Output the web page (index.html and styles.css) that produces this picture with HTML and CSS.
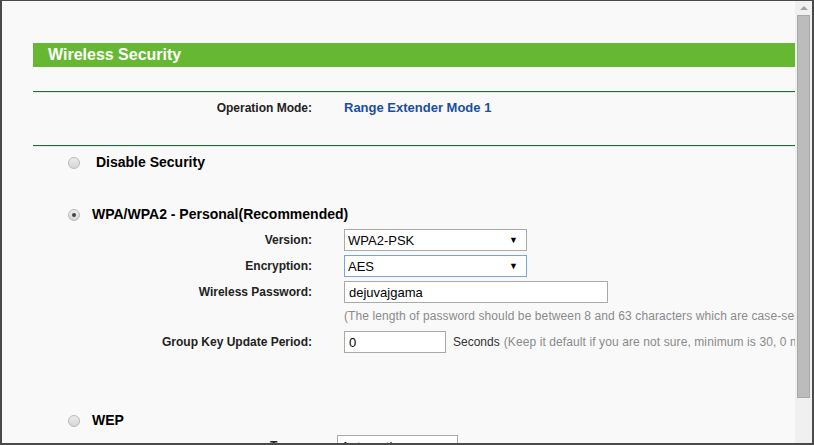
FILE: index.html
```html
<!DOCTYPE html>
<html lang="en">
<head>
    <meta charset="UTF-8">
    <title>Wireless Security</title>
    <link rel="stylesheet" href="styles.css">
</head>
<body>
    <div class="window">
        <div class="viewport">
            <div class="page">
                <div class="title-bar">Wireless Security</div>
                <div class="rule"></div>

                <div class="mode-row">
                    <span class="field-label">Operation Mode:</span>
                    <span class="mode-value">Range Extender Mode 1</span>
                </div>
                <div class="rule"></div>

                <label class="option option-disable">
                    <input type="radio" name="security">
                    <span>Disable Security</span>
                </label>

                <label class="option option-wpa">
                    <input type="radio" name="security" checked>
                    <span>WPA/WPA2 - Personal(Recommended)</span>
                </label>

                <div class="fields">
                    <span class="field-label">Version:</span>
                    <div class="select-box">
                        <select class="control">
                            <option>WPA2-PSK</option>
                        </select>
                        <span class="select-arrow">&#9660;</span>
                    </div>

                    <span class="field-label">Encryption:</span>
                    <div class="select-box">
                        <select class="control focused">
                            <option>AES</option>
                        </select>
                        <span class="select-arrow">&#9660;</span>
                    </div>

                    <span class="field-label">Wireless Password:</span>
                    <input type="text" class="control password" value="dejuvajgama">

                    <span></span>
                    <span class="hint hint-row">(The length of password should be between 8 and 63 characters which are case-sensitive.)</span>

                    <span class="field-label">Group Key Update Period:</span>
                    <div class="inline">
                        <input type="text" class="control period" value="0">
                        <span class="unit">Seconds</span>
                        <span class="hint">(Keep it default if you are not sure, minimum is 30, 0 means no update.)</span>
                    </div>
                </div>

                <label class="option option-wep">
                    <input type="radio" name="security">
                    <span>WEP</span>
                </label>

                <div class="fields fields-wep">
                    <span class="field-label">Type:</span>
                    <div class="select-box">
                        <select class="control type">
                            <option>Automatic</option>
                        </select>
                        <span class="select-arrow">&#9660;</span>
                    </div>
                </div>
            </div>
        </div>
        <div class="scrollbar">
            <span class="scroll-arrow"></span>
            <div class="scroll-thumb"></div>
        </div>
    </div>
</body>
</html>
```

FILE: styles.css
```css
body {
    margin: 0;
    font-family: "Liberation Sans", Arial, sans-serif;
    background: #ffffff;
}
.window {
    width: 810px;
    height: 442px;
    border: 2px solid #4a4a4a;
    border-top-width: 1px;
    display: flex;
    overflow: hidden;
}
.viewport {
    flex: 1;
    background: #f9f9f9;
    overflow: hidden;
}
.page {
    padding: 42px 0 0 31px;
}
.title-bar {
    height: 24px;
    line-height: 24px;
    padding-left: 15px;
    background: #66b832;
    color: #ffffff;
    font-size: 16px;
    font-weight: bold;
}
.rule {
    margin-top: 24px;
    border-top: 1px solid #1f6a37;
    border-bottom: 1px solid #e3ece5;
}
.mode-row {
    display: grid;
    grid-template-columns: 279px 1fr;
    column-gap: 32px;
    height: 52px;
    padding-top: 7px;
    box-sizing: border-box;
    line-height: 16px;
}
.mode-row + .rule {
    margin-top: 0;
}
.field-label {
    text-align: right;
    font-size: 12px;
    font-weight: bold;
    color: #222;
}
.mode-value {
    font-size: 13px;
    font-weight: bold;
    color: #1a4ea3;
}
.option {
    display: flex;
    align-items: center;
    margin-left: 35px;
    line-height: 16px;
    font-size: 14px;
    font-weight: bold;
    color: #000;
}
.option input {
    appearance: none;
    -webkit-appearance: none;
    width: 12px;
    height: 12px;
    margin: 1px 12px 0 0;
    border: 1px solid #b9b9b9;
    border-radius: 50%;
    background: linear-gradient(#ececec, #d6d6d6);
    box-sizing: border-box;
    position: relative;
}
.option input:checked::after {
    content: "";
    position: absolute;
    left: 3px;
    top: 3px;
    width: 4px;
    height: 4px;
    border-radius: 50%;
    background: #444;
}
.option-disable {
    margin-top: 7px;
}
.option-disable input {
    margin-right: 16px;
}
.option-wpa {
    margin-top: 36px;
}
.option-wep {
    margin-top: 59px;
}
.fields {
    display: grid;
    grid-template-columns: 279px 1fr;
    column-gap: 32px;
    row-gap: 4px;
    align-items: center;
    margin-top: 7px;
}
.fields-wep {
    grid-template-columns: 268px 1fr;
    column-gap: 36px;
}
.select-box {
    position: relative;
    width: 183px;
}
.control {
    height: 22px;
    box-sizing: border-box;
    border: 1px solid #a9a9a9;
    background: #ffffff;
    padding: 0 4px;
    font-family: "Liberation Sans", Arial, sans-serif;
    font-size: 13px;
    color: #000;
    margin: 0;
    outline: none;
    border-radius: 0;
}
select.control {
    appearance: none;
    -webkit-appearance: none;
    width: 100%;
    padding-left: 3px;
}
.control.focused {
    border-color: #7ca4d8;
}
.select-arrow {
    position: absolute;
    right: 9px;
    top: 6px;
    font-size: 9px;
    line-height: 10px;
    color: #000;
    pointer-events: none;
}
.password {
    width: 264px;
}
.hint {
    white-space: nowrap;
    font-size: 12px;
    color: #8a8a8a;
    letter-spacing: 0.1px;
}
.hint-row {
    line-height: 18px;
    padding-bottom: 2px;
}
.inline {
    display: flex;
    align-items: center;
    white-space: nowrap;
}
.period {
    width: 102px;
    flex: none;
}
.unit {
    margin-left: 7px;
    margin-right: 4px;
    font-size: 12px;
    color: #333;
}
.fields-wep .select-box {
    width: 121px;
}
.scrollbar {
    width: 17px;
    flex: none;
    background: #f0f0f0;
    position: relative;
}
.scroll-arrow {
    position: absolute;
    left: 5px;
    top: 5px;
    border-left: 4px solid transparent;
    border-right: 4px solid transparent;
    border-bottom: 4px solid #a3a3a3;
}
.scroll-thumb {
    position: absolute;
    left: 2px;
    top: 14px;
    width: 13px;
    height: 383px;
    box-sizing: border-box;
    background: #bcbcbc;
    border: 1px solid #a9a9a9;
}
```
